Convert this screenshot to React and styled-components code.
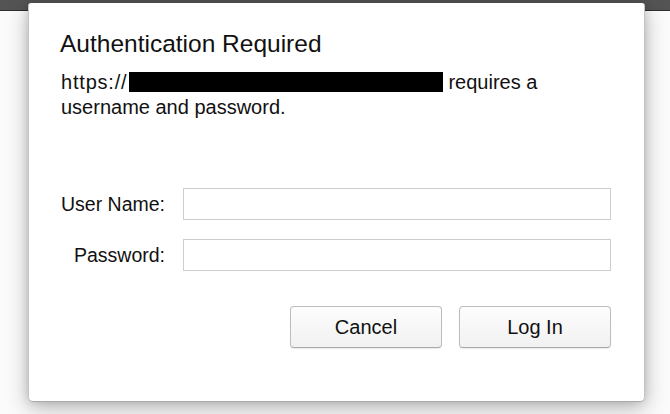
import React from "react";
import styled, { createGlobalStyle } from "styled-components";

const Global = createGlobalStyle`
  html, body { margin: 0; padding: 0; }
  body {
    width: 670px;
    height: 414px;
    overflow: hidden;
    background: #fbfbfb;
    font-family: "Liberation Sans", Arial, sans-serif;
    -webkit-font-smoothing: antialiased;
  }
`;

const Page = styled.div`
  position: relative;
  width: 670px;
  height: 414px;
  background: #fbfbfb;
`;

const TopBar = styled.div`
  height: 10px;
  background: #545454;
  border-bottom: 1px solid #2e2e2e;
`;

const Dialog = styled.div`
  position: absolute;
  top: 3px;
  left: 28px;
  width: 617px;
  height: 399px;
  box-sizing: border-box;
  background: #fff;
  border: 1px solid #c4c4c4;
  border-top: none;
  border-bottom: 1px solid #a9a9a9;
  border-radius: 3px 3px 5px 5px;
  box-shadow: 0 6px 22px rgba(0, 0, 0, 0.28), 0 0 8px rgba(0, 0, 0, 0.12);
  padding: 27px 33px 0 31px;
  display: flex;
  flex-direction: column;
  color: #111;
`;

const Title = styled.h1`
  margin: 0;
  font-size: 24.5px;
  font-weight: 400;
  line-height: 28px;
  color: #111;
`;

const Message = styled.p`
  margin: 12px 0 0 1px;
  font-size: 20px;
  line-height: 25px;
  color: #111;
`;

const Scheme = styled.span`
  letter-spacing: 0.8px;
`;

const Redacted = styled.span`
  display: inline-block;
  width: 314px;
  height: 20px;
  background: #000;
  vertical-align: -3px;
  margin: 0 5px 0 2px;
`;

const Form = styled.div`
  margin-top: 68px;
  display: grid;
  grid-template-columns: 105px 428px;
  column-gap: 18px;
  row-gap: 19px;
  align-items: center;
`;

const Label = styled.label`
  text-align: right;
  white-space: nowrap;
  font-size: 19.5px;
  line-height: 24px;
  color: #111;
`;

const Input = styled.input`
  box-sizing: border-box;
  height: 32px;
  width: 428px;
  border: 1px solid #cdcdcd;
  background: #fff;
  outline: none;
  font-family: inherit;
  font-size: 16px;
  padding: 0 6px;
`;

const Actions = styled.div`
  margin-top: 35px;
  display: flex;
  justify-content: flex-end;
  gap: 17px;
`;

const Button = styled.button`
  box-sizing: border-box;
  width: 152px;
  height: 42px;
  border: 1px solid #bdbdbd;
  border-bottom-color: #aaa;
  border-radius: 4px;
  background: linear-gradient(#fdfdfd, #f1f1f1);
  box-shadow: 0 1px 1px rgba(0, 0, 0, 0.08);
  font-family: inherit;
  font-size: 20px;
  color: #111;
  padding: 0;
  cursor: default;
`;

export default function App() {
  return (
    <Page>
      <Global />
      <TopBar />
      <Dialog>
        <Title>Authentication Required</Title>
        <Message>
          <Scheme>https://</Scheme>
          <Redacted />requires a
          <br />
          username and password.
        </Message>
        <Form>
          <Label htmlFor="user">User Name:</Label>
          <Input id="user" type="text" />
          <Label htmlFor="pass">Password:</Label>
          <Input id="pass" type="password" />
        </Form>
        <Actions>
          <Button>Cancel</Button>
          <Button>Log In</Button>
        </Actions>
      </Dialog>
    </Page>
  );
}
